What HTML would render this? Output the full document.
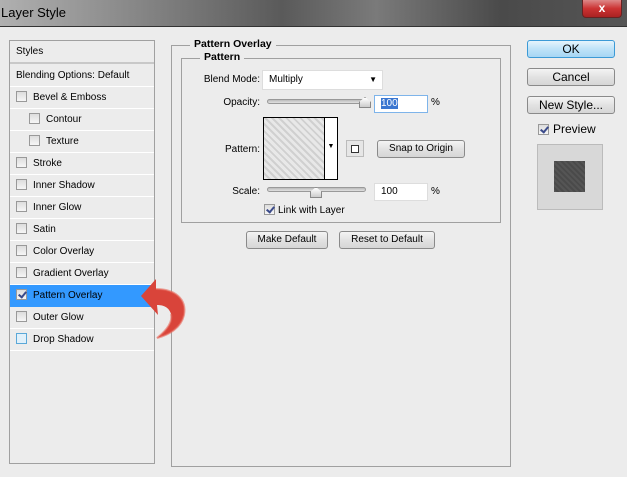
<!DOCTYPE html>
<html><head><style>
*{box-sizing:border-box;margin:0;padding:0}
body{width:627px;height:477px;background:#ececec;font-family:"Liberation Sans",sans-serif;font-size:10px;color:#000;position:relative;overflow:hidden}
.a{position:absolute}
.title{left:0;top:0;width:627px;height:27px;background:linear-gradient(90deg,#b0b0b0 0%,#8a8a8a 20%,#5a5a5a 45%,#7a7a7a 60%,#4a4a4a 80%,#555 100%);border-bottom:1px solid #333}
.title span{position:absolute;left:1px;top:5px;font-size:13px;color:#000}
.close{left:582px;top:0;width:40px;height:18px;background:linear-gradient(#d88,#c33 50%,#a22);border:1px solid #622;border-top:none;border-radius:0 0 4px 4px;color:#fff;font-weight:bold;text-align:center;font-size:12px;line-height:16px}
.panel{left:9px;top:40px;width:146px;height:424px;border:1px solid #a0a0a0;background:#ececec}
.row{position:absolute;left:0;width:144px;height:22px;border-bottom:1px solid #fff;line-height:22px;padding-left:6px;font-size:10px;white-space:nowrap}
.cb{display:inline-block;position:relative;width:11px;height:11px;border:1px solid #999;background:linear-gradient(#ddd,#f6f6f6);vertical-align:-2px;margin-right:6px}
.cb.k::after{content:"";position:absolute;left:3px;top:0px;width:3px;height:6px;border:solid #3a4a8a;border-width:0 2px 2px 0;transform:rotate(40deg)}
.fs{border:1px solid #a0a0a0}
.leg{position:absolute;background:#ececec;font-weight:bold;padding:0 4px;font-size:10.5px}
.btn{position:absolute;height:18px;border:1px solid #8a8a8a;border-radius:3px;background:linear-gradient(#f4f4f4,#e2e2e2 50%,#d6d6d6);text-align:center;line-height:16px;font-size:10px}
.in{position:absolute;background:#fff;border:1px solid #c8d0d8;height:18px;line-height:16px;padding-left:6px}
.slider{position:absolute;height:5px;border:1px solid #999;border-radius:3px;background:linear-gradient(#bbb,#e0e0e0)}
.lbl{position:absolute;text-align:right}
</style></head><body>
<div class="a title"><span>Layer Style</span></div>
<div class="a close">x</div>

<div class="a panel">
<div class="row" style="top:0;height:23px;border-bottom:2px solid #c8c8c8;line-height:22px">Styles</div>
<div class="row" style="top:24px;line-height:21px">Blending Options: Default</div>
<div class="row" style="top:46px"><span class="cb"></span>Bevel &amp; Emboss</div>
<div class="row" style="top:68px;padding-left:19px"><span class="cb"></span>Contour</div>
<div class="row" style="top:90px;padding-left:19px"><span class="cb"></span>Texture</div>
<div class="row" style="top:112px"><span class="cb"></span>Stroke</div>
<div class="row" style="top:134px"><span class="cb"></span>Inner Shadow</div>
<div class="row" style="top:156px"><span class="cb"></span>Inner Glow</div>
<div class="row" style="top:178px"><span class="cb"></span>Satin</div>
<div class="row" style="top:200px"><span class="cb"></span>Color Overlay</div>
<div class="row" style="top:222px"><span class="cb"></span>Gradient Overlay</div>
<div class="row" style="top:244px;background:#3399ff;border-bottom-color:#3399ff"><span class="cb k"></span>Pattern Overlay</div>
<div class="row" style="top:266px"><span class="cb"></span>Outer Glow</div>
<div class="row" style="top:288px"><span class="cb" style="border-color:#5aa8d8;background:#e0f0fa"></span>Drop Shadow</div>
</div>

<div class="a fs" style="left:171px;top:45px;width:340px;height:422px"></div>
<div class="leg" style="left:190px;top:38px">Pattern Overlay</div>
<div class="a fs" style="left:181px;top:58px;width:320px;height:165px"></div>
<div class="leg" style="left:200px;top:51px">Pattern</div>

<div class="lbl" style="left:190px;top:74px;width:70px">Blend Mode:</div>
<div class="in" style="left:262px;top:70px;width:121px;border-color:#ddd;height:20px;line-height:18px">Multiply<span style="position:absolute;right:5px;top:0;font-size:8px">▼</span></div>
<div class="lbl" style="left:190px;top:97px;width:70px">Opacity:</div>
<div class="slider" style="left:267px;top:99px;width:100px"></div>
<div class="a" style="left:359px;top:97px;width:12px;height:11px;background:linear-gradient(#fff,#ccc);border:1px solid #888;clip-path:polygon(50% 0,100% 45%,100% 100%,0 100%,0 45%)"></div>
<div class="in" style="left:374px;top:95px;width:54px;border-color:#7eb4ea"><span style="background:#3a76d0;color:#fff">100</span></div>
<div class="a" style="left:431px;top:97px">%</div>

<div class="lbl" style="left:190px;top:144px;width:70px">Pattern:</div>
<div class="a" style="left:263px;top:117px;width:75px;height:63px;border:1px solid #000;background:#ddd repeating-linear-gradient(45deg,#e8e8e8 0 3px,#d0d0d0 3px 5px)"></div>
<div class="a" style="left:324px;top:117px;width:14px;height:63px;border:1px solid #000;background:#fff;font-size:7px;text-align:center;line-height:58px">▼</div>
<div class="a" style="left:346px;top:140px;width:18px;height:17px;border:1px solid #bbb;background:#e6e6e6"><div class="a" style="left:4px;top:4px;width:8px;height:8px;border:1px solid #333;background:#fff"></div></div>
<div class="btn" style="left:377px;top:140px;width:88px;height:18px">Snap to Origin</div>

<div class="lbl" style="left:190px;top:186px;width:70px">Scale:</div>
<div class="slider" style="left:267px;top:187px;width:99px"></div>
<div class="a" style="left:310px;top:187px;width:12px;height:11px;background:linear-gradient(#fff,#ccc);border:1px solid #888;clip-path:polygon(50% 0,100% 45%,100% 100%,0 100%,0 45%)"></div>
<div class="in" style="left:374px;top:183px;width:54px;border-color:#ddd">100</div>
<div class="a" style="left:431px;top:186px">%</div>
<div class="a" style="left:264px;top:204px;white-space:nowrap"><span class="cb k" style="margin-right:3px"></span>Link with Layer</div>

<div class="btn" style="left:246px;top:231px;width:82px">Make Default</div>
<div class="btn" style="left:339px;top:231px;width:96px">Reset to Default</div>

<div class="btn" style="left:527px;top:40px;width:88px;border-color:#3c9ad6;background:linear-gradient(#e6f4fc,#bfe3f8 50%,#a6d6f4);font-size:12px">OK</div>
<div class="btn" style="left:527px;top:68px;width:88px;font-size:12px">Cancel</div>
<div class="btn" style="left:527px;top:96px;width:88px;font-size:12px">New Style...</div>
<div class="a" style="left:538px;top:122px;font-size:12px;white-space:nowrap"><span class="cb k" style="margin-right:4px"></span>Preview</div>
<div class="a" style="left:537px;top:144px;width:66px;height:66px;border:1px solid #bbb;background:#d8d8d8"><div class="a" style="left:16px;top:16px;width:31px;height:31px;background:repeating-linear-gradient(45deg,#555 0 2px,#4a4a4a 2px 4px)"></div></div>

<svg class="a" style="left:135px;top:275px" width="60" height="70" viewBox="0 0 60 70">
<path d="M6 21 L21 4 L21 14 C40 14 52 24 49 40 C46 53 34 60 22 63 C32 55 38 47 36 39 C34 32 28 30 22 30 L23 40 Z" fill="#d9443a"/>
<path d="M21 14 C40 14 52 24 49 40 C46 53 34 60 22 63 C32 55 38 47 36 39" fill="none" stroke="#e86a5e" stroke-width="2" opacity=".6"/>
</svg>
</body></html>
